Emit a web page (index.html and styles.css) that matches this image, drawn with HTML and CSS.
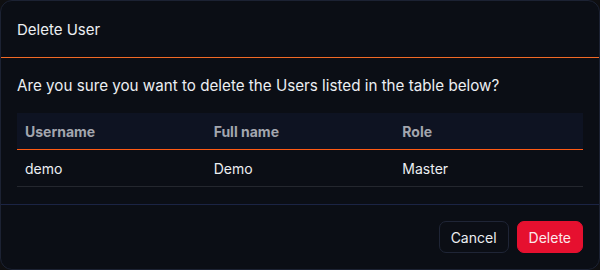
FILE: index.html
```html
<!DOCTYPE html>
<html lang="en">
<head>
  <meta charset="UTF-8" />
  <title>Delete User</title>
  <link rel="stylesheet" href="styles.css">
</head>
<body>
  <!-- Confirmation dialog -->
  <div class="dialog">
    <div class="dialog-header">Delete User</div>

    <div class="dialog-body">
      <p class="question">Are you sure you want to delete the Users listed in the table below?</p>
      <table class="user-table">
        <thead>
          <tr>
            <th>Username</th>
            <th>Full name</th>
            <th>Role</th>
          </tr>
        </thead>
        <tbody>
          <tr>
            <td>demo</td>
            <td>Demo</td>
            <td>Master</td>
          </tr>
        </tbody>
      </table>
    </div>

    <div class="dialog-footer">
      <button class="btn btn-cancel">Cancel</button>
      <button class="btn btn-delete">Delete</button>
    </div>
  </div>
</body>
</html>
```

FILE: styles.css
```css
/* Page backdrop */
body {
  margin: 0;
  background: #0f0f11;
  font-family: Inter, "Noto Sans", sans-serif;
  color: #eceef2;
}

/* Dialog card */
.dialog {
  box-sizing: border-box;
  width: 600px;
  height: 270px;
  background: #0b0e15;
  border: 1px solid #1c2233;
  border-radius: 12px;
  display: flex;
  flex-direction: column;
}

.dialog-header {
  height: 56px;
  padding: 0 16px;
  display: flex;
  align-items: center;
  font-size: 15px;
  border-bottom: 1px solid #f26a26;
}

.dialog-body {
  padding: 16px 16px 16px;
}

.question {
  margin: 0 0 15px 0;
  font-size: 15.2px;
  line-height: 24px;
}

/* Users table */
.user-table {
  width: 100%;
  border-collapse: collapse;
  table-layout: fixed;
  font-size: 14px;
}

.user-table th {
  text-align: left;
  font-weight: 700;
  color: #a3a6ae;
  background: #0e1322;
  padding: 0 8px;
  height: 36px;
  border-bottom: 1px solid #ff5a14;
}

.user-table td {
  padding: 0 8px;
  height: 36px;
  border-bottom: 1px solid #24272e;
}

.dialog-footer {
  margin-top: auto;
  border-top: 1px solid #1b2444;
  padding: 16px;
  display: flex;
  justify-content: flex-end;
  gap: 8px;
}

/* Buttons */
.btn {
  font-family: inherit;
  font-size: 14px;
  height: 32px;
  padding: 0 11px;
  border-radius: 7px;
  cursor: pointer;
}

.btn-cancel {
  background: #0b0e15;
  color: #eceef2;
  border: 1px solid #1f2536;
}

.btn-delete {
  background: #e6102f;
  color: #fbe9ec;
  border: 1px solid #e6102f;
}
```
